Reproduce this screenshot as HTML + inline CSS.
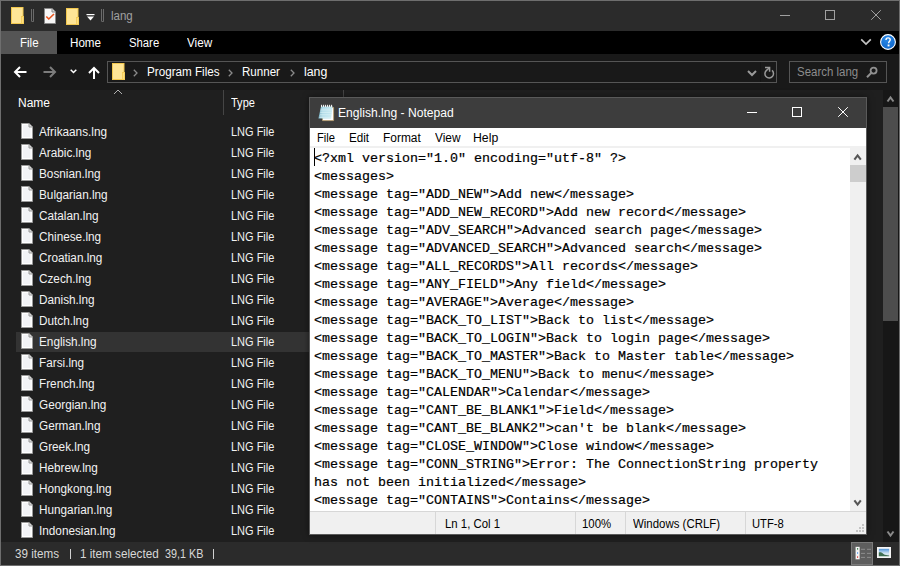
<!DOCTYPE html>
<html><head><meta charset="utf-8">
<style>
*{margin:0;padding:0;box-sizing:border-box}
html,body{width:900px;height:566px;overflow:hidden;background:#6e6e6e}
body{position:relative;font-family:"Liberation Sans",sans-serif;font-size:12px;color:#fff}
.a{position:absolute;display:block}
.t{position:absolute;white-space:nowrap;line-height:12px;font-size:12px}
.fn{left:39px;color:#f2f2f2;transform:scaleX(0.98);transform-origin:0 0}
.ft{left:230.5px;color:#f2f2f2;transform:scaleX(0.916);transform-origin:0 0}
.bk{color:#000}
</style></head><body>
<svg width="0" height="0" style="position:absolute">
<defs>
<symbol id="pg" viewBox="0 0 12 16">
<path d="M0.5 0.5H8L11.5 4V15.5H0.5Z" fill="#fff" stroke="#9a9a9a"/>
<rect x="2" y="2" width="7.5" height="12" fill="#f2f3f6"/>
<path d="M8 0.5V4H11.5" fill="#d8d8d8" stroke="#9a9a9a"/>
</symbol>
<symbol id="fold" viewBox="0 0 14 17">
<rect x="0.5" y="0.5" width="11.5" height="16" fill="#ffe596" stroke="#f2c84f"/>
<rect x="10" y="9" width="3" height="8" fill="#f4cc55"/><rect x="10.8" y="10" width="1.4" height="6" fill="#ffdf80"/>
</symbol>
</defs>
</svg>

<!-- explorer frame -->
<div class="a" style="left:1px;top:1px;width:898px;height:564px;background:#191919"></div>
<!-- title bar -->
<div class="a" style="left:1px;top:1px;width:898px;height:30px;background:#2b2b2b"></div>
<svg class="a" style="left:11px;top:7px" width="14" height="17"><use href="#fold"/></svg>
<div class="a" style="left:31px;top:9px;width:3px;height:13px;border:1px solid #6a6a6a;border-top:none;border-radius:0 0 2px 2px"></div>
<svg class="a" style="left:44px;top:8px" width="12" height="16" viewBox="0 0 12 16"><path d="M0.5 0.5H8L11.5 4V15.5H0.5Z" fill="#f7f7f7" stroke="#8a8a8a"/><path d="M8 0.5V4H11.5" fill="#ddd" stroke="#8a8a8a"/><path d="M2.3 8.5L4.8 11L10 6" fill="none" stroke="#e8541d" stroke-width="1.6"/></svg>
<svg class="a" style="left:66px;top:8px" width="14" height="17"><use href="#fold"/></svg>
<svg class="a" style="left:86px;top:14px" width="9" height="7" viewBox="0 0 9 7"><rect x="0.5" y="0" width="8" height="1.2" fill="#fff"/><path d="M1 2.5H8L4.5 6.5Z" fill="#fff"/></svg>
<div class="a" style="left:101px;top:9px;width:3px;height:13px;border:1px solid #6a6a6a;border-top:none;border-radius:0 0 2px 2px"></div>
<div class="t" style="left:111px;top:10px;color:#a0a0a0;transform:scaleX(0.96);transform-origin:0 0">lang</div>
<svg class="a" style="left:780px;top:10px" width="10" height="10" viewBox="0 0 10 10"><path d="M0 5.5H10" stroke="#a0a0a0" stroke-width="1"/></svg>
<svg class="a" style="left:825px;top:10px" width="10" height="10" viewBox="0 0 10 10"><rect x="0.5" y="0.5" width="9" height="9" fill="none" stroke="#a0a0a0"/></svg>
<svg class="a" style="left:871px;top:10px" width="10" height="10" viewBox="0 0 10 10"><path d="M0.2 0.2L9.8 9.8M9.8 0.2L0.2 9.8" stroke="#a0a0a0" stroke-width="1"/></svg>

<!-- ribbon tabs -->
<div class="a" style="left:1px;top:31px;width:898px;height:23px;background:#000"></div>
<div class="a" style="left:1px;top:31px;width:56px;height:23px;background:#555"></div>
<div class="t" style="left:19.53px;top:37px;transform:scaleX(0.9607);transform-origin:0 0">File</div>
<div class="t" style="left:69.89px;top:37px;transform:scaleX(0.9683);transform-origin:0 0">Home</div>
<div class="t" style="left:129.37px;top:37px;transform:scaleX(0.9425);transform-origin:0 0">Share</div>
<div class="t" style="left:187.33px;top:37px;transform:scaleX(0.9775);transform-origin:0 0">View</div>
<svg class="a" style="left:860px;top:38px" width="12" height="8" viewBox="0 0 12 8"><path d="M1.2 1.4L6 6L10.8 1.4" fill="none" stroke="#c4c4c4" stroke-width="1.7"/></svg>
<svg class="a" style="left:880px;top:34px" width="16" height="16" viewBox="0 0 16 16"><defs><radialGradient id="hg" cx="0.4" cy="0.3" r="0.8"><stop offset="0" stop-color="#2a8ae8"/><stop offset="1" stop-color="#0b62c8"/></radialGradient></defs><circle cx="8" cy="8" r="7.4" fill="url(#hg)" stroke="#fff" stroke-width="1.1"/><path d="M6 6C6 4.6 6.9 3.9 8.1 3.9C9.4 3.9 10.2 4.7 10.2 5.8C10.2 7.2 8.6 7.5 8.6 9.3" fill="none" stroke="#fff" stroke-width="1.4"/><rect x="7.6" y="10.5" width="1.9" height="1.9" fill="#fff"/></svg>

<!-- nav row -->
<div class="a" style="left:1px;top:54px;width:898px;height:36px;background:#191919"></div>
<svg class="a" style="left:13px;top:66px" width="14" height="12" viewBox="0 0 14 12"><path d="M13.5 6H2M7 1L2 6L7 11" fill="none" stroke="#fff" stroke-width="2"/></svg>
<svg class="a" style="left:43px;top:66px" width="14" height="12" viewBox="0 0 14 12"><path d="M0.5 6H12M7 1L12 6L7 11" fill="none" stroke="#7c7c7c" stroke-width="2"/></svg>
<svg class="a" style="left:70px;top:69px" width="7" height="5" viewBox="0 0 7 5"><path d="M0.7 0.7L3.5 3.5L6.3 0.7" fill="none" stroke="#fff" stroke-width="1.5"/></svg>
<svg class="a" style="left:88px;top:66px" width="12" height="13" viewBox="0 0 12 13"><path d="M6 13V2M1 7L6 2L11 7" fill="none" stroke="#fff" stroke-width="2"/></svg>
<div class="a" style="left:107px;top:61px;width:670px;height:22px;border:1px solid #555"></div>
<div class="a" style="left:760px;top:62px;width:1px;height:20px;background:#141414"></div>
<svg class="a" style="left:112px;top:63px" width="14" height="17"><use href="#fold"/></svg>
<svg class="a" style="left:133px;top:69px" width="5" height="8" viewBox="0 0 5 8"><path d="M0.8 0.8L4 4L0.8 7.2" fill="none" stroke="#8a8a8a" stroke-width="1.3"/></svg>
<div class="t" style="left:146.89px;top:66px;transform:scaleX(0.9724);transform-origin:0 0">Program Files</div>
<svg class="a" style="left:228px;top:69px" width="5" height="8" viewBox="0 0 5 8"><path d="M0.8 0.8L4 4L0.8 7.2" fill="none" stroke="#8a8a8a" stroke-width="1.3"/></svg>
<div class="t" style="left:241.92px;top:66px;transform:scaleX(0.9636);transform-origin:0 0">Runner</div>
<svg class="a" style="left:290px;top:69px" width="5" height="8" viewBox="0 0 5 8"><path d="M0.8 0.8L4 4L0.8 7.2" fill="none" stroke="#8a8a8a" stroke-width="1.3"/></svg>
<div class="t" style="left:304.26px;top:66px;transform:scaleX(1.0286);transform-origin:0 0">lang</div>
<svg class="a" style="left:747px;top:70px" width="10" height="7" viewBox="0 0 10 7"><path d="M1 1L5 5L9 1" fill="none" stroke="#9a9a9a" stroke-width="2"/></svg>
<svg class="a" style="left:760px;top:63px" width="18" height="18" viewBox="0 0 18 18"><path d="M12 7.4A4.3 4.3 0 1 1 6.2 7.6L9.2 5" fill="none" stroke="#9a9a9a" stroke-width="1.5"/><path d="M5 4.6H9.6V8.8" fill="none" stroke="#9a9a9a" stroke-width="1.5"/></svg>
<div class="a" style="left:789px;top:61px;width:98px;height:22px;border:1px solid #555"></div>
<div class="t" style="left:797.18px;top:66px;color:#8c8c8c;transform:scaleX(0.9552);transform-origin:0 0">Search lang</div>
<svg class="a" style="left:866px;top:66px" width="12" height="12" viewBox="0 0 12 12"><circle cx="7.6" cy="4.6" r="3" fill="none" stroke="#909090" stroke-width="1.8"/><path d="M5.4 6.8L1 11.2" stroke="#909090" stroke-width="2"/></svg>

<!-- list -->
<div class="a" style="left:1px;top:90px;width:882px;height:452px;background:#1f1f1f"></div>
<svg class="a" style="left:113px;top:89px" width="10" height="6" viewBox="0 0 10 6"><path d="M1 5L5 1L9 5" fill="none" stroke="#b0b0b0" stroke-width="1"/></svg>
<div class="t" style="left:18px;top:97px">Name</div>
<div class="t" style="left:230.91px;top:97px;transform:scaleX(0.9182);transform-origin:0 0">Type</div>
<div class="a" style="left:223px;top:90px;width:1px;height:25px;background:#454545"></div>
<div class="a" style="left:343px;top:90px;width:1px;height:25px;background:#454545"></div>
<div class="a" style="left:16px;top:332px;width:294px;height:20px;background:#333"></div>
<svg class="a" style="left:21px;top:123px" width="12" height="16"><use href="#pg"/></svg><div class="t fn" style="top:126px">Afrikaans.lng</div><div class="t ft" style="top:126px">LNG File</div>
<svg class="a" style="left:21px;top:144px" width="12" height="16"><use href="#pg"/></svg><div class="t fn" style="top:147px">Arabic.lng</div><div class="t ft" style="top:147px">LNG File</div>
<svg class="a" style="left:21px;top:165px" width="12" height="16"><use href="#pg"/></svg><div class="t fn" style="top:168px">Bosnian.lng</div><div class="t ft" style="top:168px">LNG File</div>
<svg class="a" style="left:21px;top:186px" width="12" height="16"><use href="#pg"/></svg><div class="t fn" style="top:189px">Bulgarian.lng</div><div class="t ft" style="top:189px">LNG File</div>
<svg class="a" style="left:21px;top:207px" width="12" height="16"><use href="#pg"/></svg><div class="t fn" style="top:210px">Catalan.lng</div><div class="t ft" style="top:210px">LNG File</div>
<svg class="a" style="left:21px;top:228px" width="12" height="16"><use href="#pg"/></svg><div class="t fn" style="top:231px">Chinese.lng</div><div class="t ft" style="top:231px">LNG File</div>
<svg class="a" style="left:21px;top:249px" width="12" height="16"><use href="#pg"/></svg><div class="t fn" style="top:252px">Croatian.lng</div><div class="t ft" style="top:252px">LNG File</div>
<svg class="a" style="left:21px;top:270px" width="12" height="16"><use href="#pg"/></svg><div class="t fn" style="top:273px">Czech.lng</div><div class="t ft" style="top:273px">LNG File</div>
<svg class="a" style="left:21px;top:291px" width="12" height="16"><use href="#pg"/></svg><div class="t fn" style="top:294px">Danish.lng</div><div class="t ft" style="top:294px">LNG File</div>
<svg class="a" style="left:21px;top:312px" width="12" height="16"><use href="#pg"/></svg><div class="t fn" style="top:315px">Dutch.lng</div><div class="t ft" style="top:315px">LNG File</div>
<svg class="a" style="left:21px;top:333px" width="12" height="16"><use href="#pg"/></svg><div class="t fn" style="top:336px">English.lng</div><div class="t ft" style="top:336px">LNG File</div>
<svg class="a" style="left:21px;top:354px" width="12" height="16"><use href="#pg"/></svg><div class="t fn" style="top:357px">Farsi.lng</div><div class="t ft" style="top:357px">LNG File</div>
<svg class="a" style="left:21px;top:375px" width="12" height="16"><use href="#pg"/></svg><div class="t fn" style="top:378px">French.lng</div><div class="t ft" style="top:378px">LNG File</div>
<svg class="a" style="left:21px;top:396px" width="12" height="16"><use href="#pg"/></svg><div class="t fn" style="top:399px">Georgian.lng</div><div class="t ft" style="top:399px">LNG File</div>
<svg class="a" style="left:21px;top:417px" width="12" height="16"><use href="#pg"/></svg><div class="t fn" style="top:420px">German.lng</div><div class="t ft" style="top:420px">LNG File</div>
<svg class="a" style="left:21px;top:438px" width="12" height="16"><use href="#pg"/></svg><div class="t fn" style="top:441px">Greek.lng</div><div class="t ft" style="top:441px">LNG File</div>
<svg class="a" style="left:21px;top:459px" width="12" height="16"><use href="#pg"/></svg><div class="t fn" style="top:462px">Hebrew.lng</div><div class="t ft" style="top:462px">LNG File</div>
<svg class="a" style="left:21px;top:480px" width="12" height="16"><use href="#pg"/></svg><div class="t fn" style="top:483px">Hongkong.lng</div><div class="t ft" style="top:483px">LNG File</div>
<svg class="a" style="left:21px;top:501px" width="12" height="16"><use href="#pg"/></svg><div class="t fn" style="top:504px">Hungarian.lng</div><div class="t ft" style="top:504px">LNG File</div>
<svg class="a" style="left:21px;top:522px" width="12" height="16"><use href="#pg"/></svg><div class="t fn" style="top:525px">Indonesian.lng</div><div class="t ft" style="top:525px">LNG File</div>
<!-- explorer scrollbar -->
<div class="a" style="left:883px;top:90px;width:16px;height:452px;background:#171717"></div>
<div class="a" style="left:883px;top:107px;width:15px;height:214px;background:#4d4d4d"></div>
<svg class="a" style="left:886px;top:95px" width="9" height="8" viewBox="0 0 9 8"><path d="M1.5 6.5L4.5 2.5L7.5 6.5" fill="none" stroke="#8a8a8a" stroke-width="2"/></svg>
<svg class="a" style="left:886px;top:530px" width="9" height="8" viewBox="0 0 9 8"><path d="M1.5 1.5L4.5 5.5L7.5 1.5" fill="none" stroke="#8a8a8a" stroke-width="2"/></svg>

<!-- status bar -->
<div class="a" style="left:1px;top:542px;width:898px;height:23px;background:#2b2b2b"></div>
<div class="t" style="left:14.69px;top:548px;color:#d8d8d8;transform:scaleX(0.9706);transform-origin:0 0">39 items</div>
<div class="a" style="left:70px;top:549px;width:1px;height:10px;background:#d0d0d0"></div>
<div class="t" style="left:80.03px;top:548px;color:#d8d8d8;transform:scaleX(0.9745);transform-origin:0 0">1 item selected</div>
<div class="t" style="left:165.02px;top:548px;color:#d8d8d8;transform:scaleX(0.8996);transform-origin:0 0">39,1 KB</div>
<div class="a" style="left:213px;top:549px;width:1px;height:10px;background:#d0d0d0"></div>
<div class="a" style="left:851px;top:542px;width:22px;height:23px;background:#5e5e5e;border:1px solid #7a7a7a"></div>
<svg class="a" style="left:855px;top:546px" width="16" height="14" viewBox="0 0 16 14"><rect x="0.5" y="0.8" width="4.2" height="12.6" fill="#d9d9d9"/><rect x="1" y="1.2" width="3.2" height="3.4" fill="#fff"/><rect x="1" y="5.3" width="3.2" height="3.4" fill="#fff"/><rect x="1" y="9.4" width="3.2" height="3.4" fill="#fff"/><circle cx="2.6" cy="2.9" r="0.8" fill="#3b7a4a"/><circle cx="2.6" cy="7" r="0.8" fill="#3d86e0"/><circle cx="2.6" cy="11.1" r="0.8" fill="#d32f2f"/><path d="M6 3.3H10M12 3.3H16M6 7.4H10M12 7.4H16M6 11.4H10M12 11.4H16" stroke="#8c8c8c" stroke-width="1"/></svg>
<svg class="a" style="left:877px;top:547px" width="14" height="11" viewBox="0 0 14 11"><defs><linearGradient id="sk" x1="0" x2="0" y1="0" y2="1"><stop offset="0" stop-color="#4f94d8"/><stop offset="0.6" stop-color="#cfe3f2"/><stop offset="1" stop-color="#dfe9ee"/></linearGradient></defs><rect x="0" y="0" width="14" height="11" fill="#f6f6f6"/><rect x="1.8" y="1.8" width="10.4" height="7.4" fill="url(#sk)"/><path d="M1.8 5.5C3.5 4.8 5 5.5 6.5 7C8 8 10 8.3 12.2 8.4V9.2H1.8Z" fill="#3f6f52"/></svg>

<!-- notepad -->
<div class="a" style="left:309px;top:97px;width:558px;height:438px;background:#5a5a5a;box-shadow:0 0 6px rgba(0,0,0,0.5)"></div>
<div class="a" style="left:310px;top:98px;width:556px;height:30px;background:#3d3d3d"></div>
<svg class="a" style="left:314px;top:100.5px" width="24" height="24" viewBox="0 0 24 24"><defs><linearGradient id="nb" x1="0" x2="1" y1="0" y2="0"><stop offset="0" stop-color="#6fa9bb"/><stop offset="0.3" stop-color="#a9d8e6"/><stop offset="1" stop-color="#c6eaf2"/></linearGradient></defs><path d="M8.5 6.5H19.6V19.6H8.5Z" fill="#fdfdfd" stroke="#b89a68" stroke-width="0.8"/><path d="M7 5.5H18.6L17 17.6H4.4Z" fill="url(#nb)"/><path d="M6.6 8.2H18.2M6.4 9.9H18M6.2 11.6H17.8M6 13.3H17.6M5.7 15H17.4M5.4 16.6H17.2" stroke="#dff3f8" stroke-width="0.7"/><path d="M7.6 3.8V6M9.6 3.8V6M11.6 3.8V6M13.6 3.8V6M15.6 3.8V6M17.6 3.8V6" stroke="#fff" stroke-width="1"/></svg>
<div class="t" style="left:338.00px;top:107px;transform:scaleX(1.0079);transform-origin:0 0">English.lng - Notepad</div>
<svg class="a" style="left:747px;top:107px" width="10" height="10" viewBox="0 0 10 10"><path d="M0 5.5H10" stroke="#fff" stroke-width="1"/></svg>
<svg class="a" style="left:792px;top:107px" width="10" height="10" viewBox="0 0 10 10"><rect x="0.5" y="0.5" width="9" height="9" fill="none" stroke="#fff"/></svg>
<svg class="a" style="left:838px;top:107px" width="10" height="10" viewBox="0 0 10 10"><path d="M0.2 0.2L9.8 9.8M9.8 0.2L0.2 9.8" stroke="#fff" stroke-width="1"/></svg>
<div class="a" style="left:310px;top:128px;width:556px;height:18px;background:#fff"></div>
<div class="t bk" style="left:317.01px;top:132px;transform:scaleX(0.9336);transform-origin:0 0">File</div>
<div class="t bk" style="left:349.10px;top:132px;transform:scaleX(0.9717);transform-origin:0 0">Edit</div>
<div class="t bk" style="left:382.84px;top:132px;transform:scaleX(0.9941);transform-origin:0 0">Format</div>
<div class="t bk" style="left:434.69px;top:132px;transform:scaleX(0.9876);transform-origin:0 0">View</div>
<div class="t bk" style="left:473.20px;top:132px;transform:scaleX(1.0210);transform-origin:0 0">Help</div>
<div class="a" style="left:310px;top:146px;width:556px;height:2px;background:#f0f0f0"></div>
<div class="a" style="left:310px;top:148px;width:556px;height:364px;background:#fff"></div>
<div class="a" style="left:850px;top:148px;width:16px;height:363px;background:#f0f0f0"></div>
<div class="a" style="left:850px;top:165px;width:16px;height:17px;background:#cdcdcd"></div>
<svg class="a" style="left:853px;top:153px" width="10" height="8" viewBox="0 0 10 8"><path d="M1.4 6.6L4.6 2.4L7.8 6.6" fill="none" stroke="#555" stroke-width="2.1"/></svg>
<svg class="a" style="left:853px;top:499px" width="10" height="8" viewBox="0 0 10 8"><path d="M1.4 1.4L4.6 5.6L7.8 1.4" fill="none" stroke="#555" stroke-width="2.1"/></svg>
<div class="a" style="left:314px;top:148px;width:1px;height:18px;background:#000"></div>
<pre class="a" style="left:314px;top:150px;font-family:'Liberation Mono',monospace;font-size:13.33px;line-height:18px;color:#000;-webkit-text-stroke:0.2px #000">&lt;?xml version="1.0" encoding="utf-8" ?&gt;
&lt;messages&gt;
&lt;message tag="ADD_NEW"&gt;Add new&lt;/message&gt;
&lt;message tag="ADD_NEW_RECORD"&gt;Add new record&lt;/message&gt;
&lt;message tag="ADV_SEARCH"&gt;Advanced search page&lt;/message&gt;
&lt;message tag="ADVANCED_SEARCH"&gt;Advanced search&lt;/message&gt;
&lt;message tag="ALL_RECORDS"&gt;All records&lt;/message&gt;
&lt;message tag="ANY_FIELD"&gt;Any field&lt;/message&gt;
&lt;message tag="AVERAGE"&gt;Average&lt;/message&gt;
&lt;message tag="BACK_TO_LIST"&gt;Back to list&lt;/message&gt;
&lt;message tag="BACK_TO_LOGIN"&gt;Back to login page&lt;/message&gt;
&lt;message tag="BACK_TO_MASTER"&gt;Back to Master table&lt;/message&gt;
&lt;message tag="BACK_TO_MENU"&gt;Back to menu&lt;/message&gt;
&lt;message tag="CALENDAR"&gt;Calendar&lt;/message&gt;
&lt;message tag="CANT_BE_BLANK1"&gt;Field&lt;/message&gt;
&lt;message tag="CANT_BE_BLANK2"&gt;can't be blank&lt;/message&gt;
&lt;message tag="CLOSE_WINDOW"&gt;Close window&lt;/message&gt;
&lt;message tag="CONN_STRING"&gt;Error: The ConnectionString property
has not been initialized&lt;/message&gt;
&lt;message tag="CONTAINS"&gt;Contains&lt;/message&gt;</pre>
<div class="a" style="left:310px;top:511px;width:556px;height:23px;background:#f0f0f0;border-top:1px solid #d7d7d7"></div>
<div class="a" style="left:435px;top:512px;width:1px;height:22px;background:#d7d7d7"></div>
<div class="a" style="left:575px;top:512px;width:1px;height:22px;background:#d7d7d7"></div>
<div class="a" style="left:625px;top:512px;width:1px;height:22px;background:#d7d7d7"></div>
<div class="a" style="left:745px;top:512px;width:1px;height:22px;background:#d7d7d7"></div>
<div class="t bk" style="left:445.40px;top:518px;transform:scaleX(0.9487);transform-origin:0 0">Ln 1, Col 1</div>
<div class="t bk" style="left:582.12px;top:518px;transform:scaleX(0.9491);transform-origin:0 0">100%</div>
<div class="t bk" style="left:633.44px;top:518px;transform:scaleX(0.9531);transform-origin:0 0">Windows (CRLF)</div>
<div class="t bk" style="left:752.09px;top:518px;transform:scaleX(0.9344);transform-origin:0 0">UTF-8</div>
<svg class="a" style="left:856px;top:524px" width="9" height="9" viewBox="0 0 9 9"><path d="M6 0h2v2h-2zM3 3h2v2h-2zM6 3h2v2h-2zM0 6h2v2h-2zM3 6h2v2h-2zM6 6h2v2h-2z" fill="#c4c4c4"/></svg>
</body></html>
